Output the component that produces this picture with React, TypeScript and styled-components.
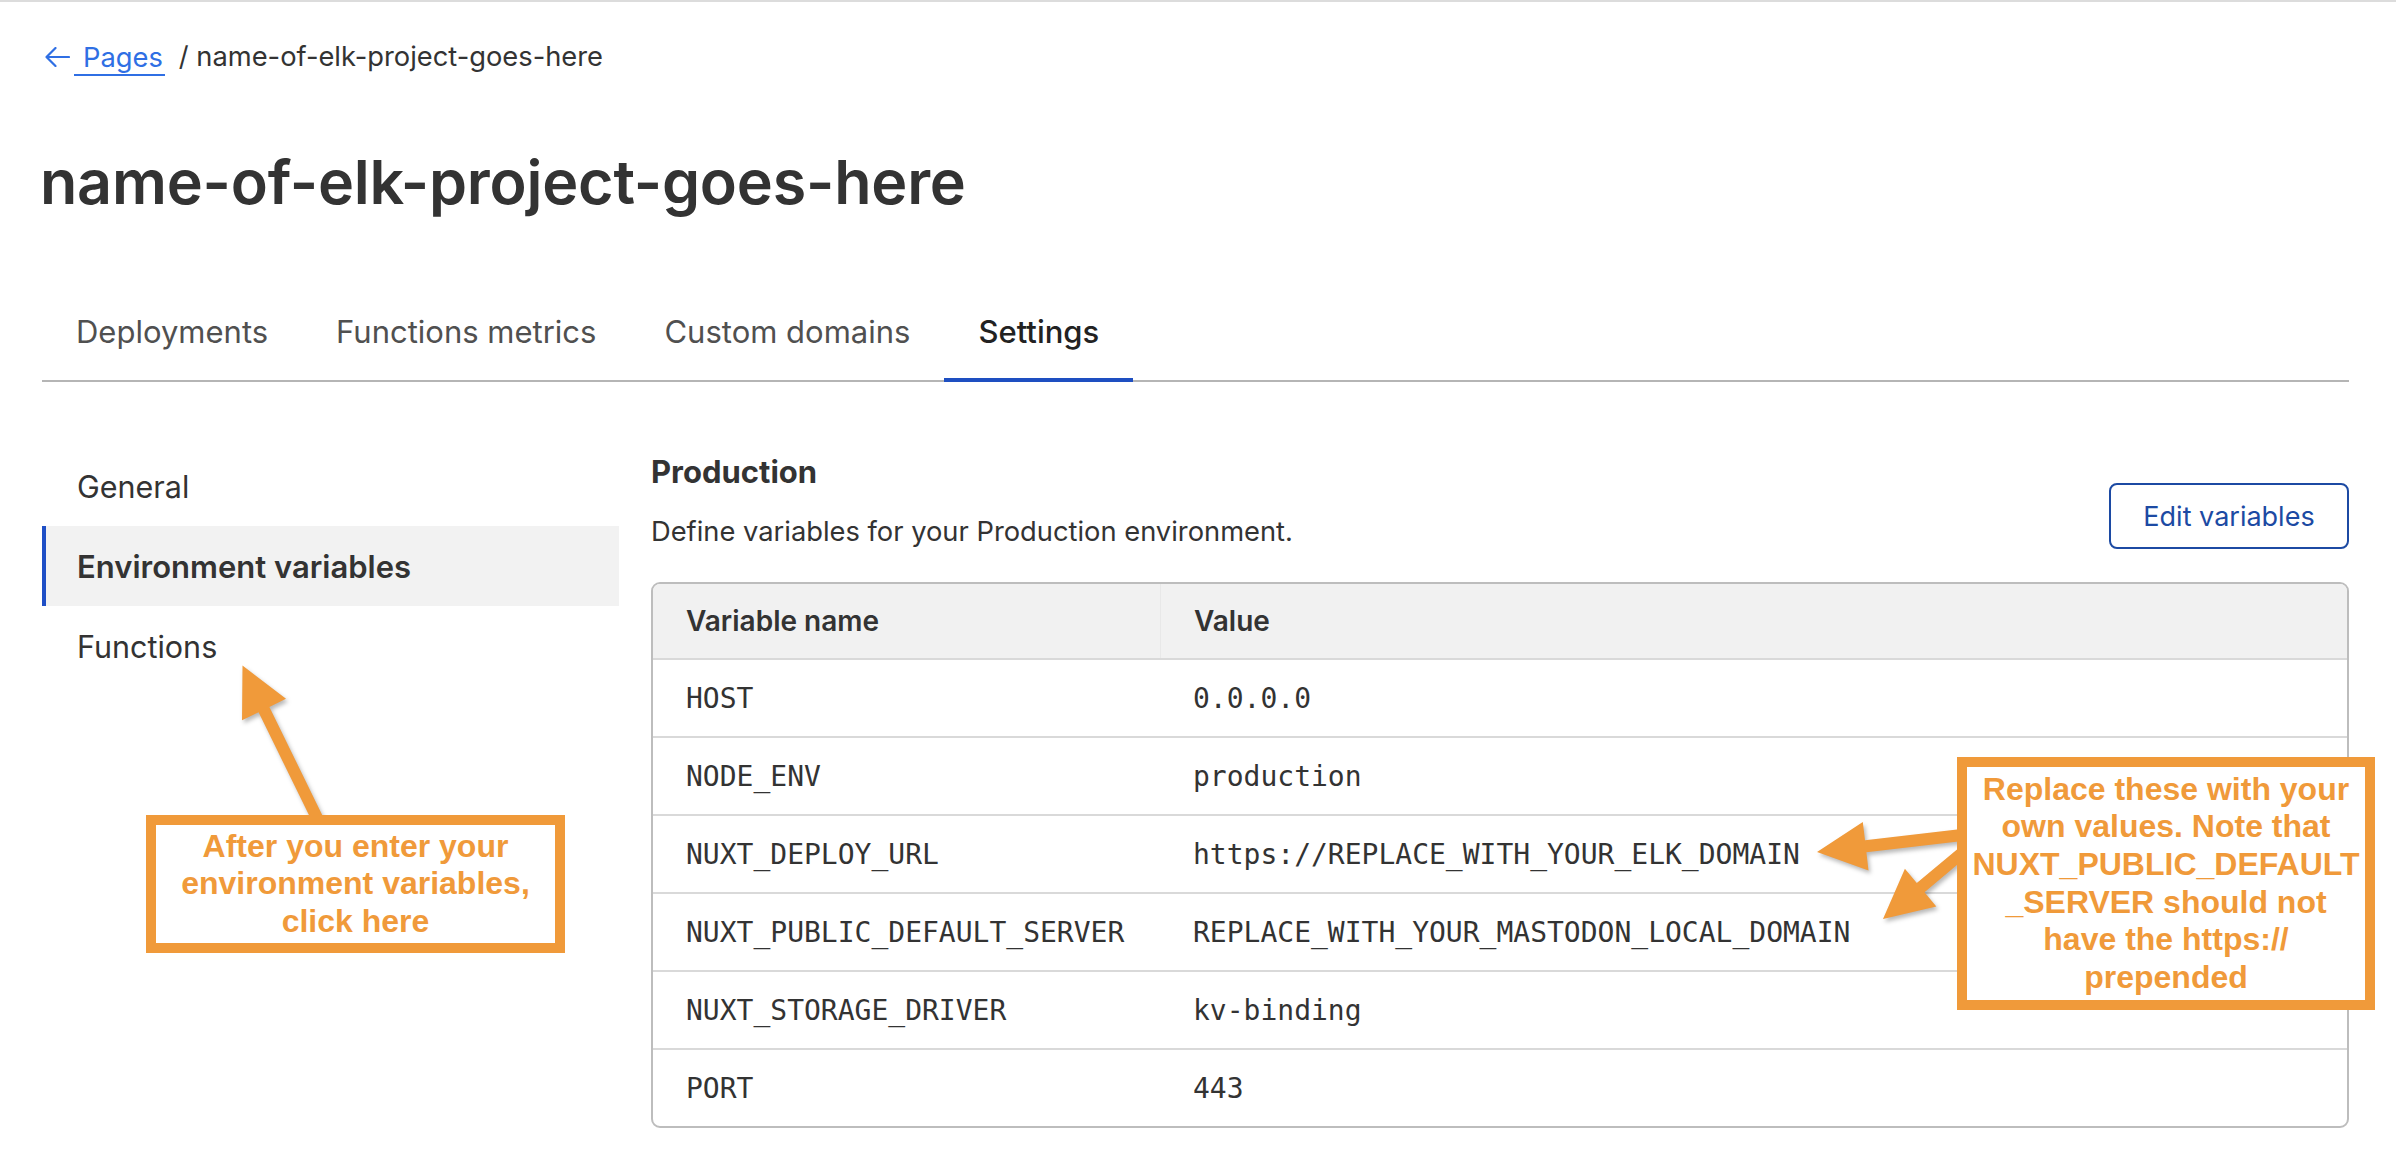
import React from "react";
import styled, { createGlobalStyle } from "styled-components";

const ORANGE = "#f09a3a";

const GlobalStyle = createGlobalStyle`
  html, body { margin: 0; padding: 0; background: #ffffff; }
  body { font-family: Inter, "Noto Sans", Arial, sans-serif; color: #333333; }
  * { box-sizing: border-box; }
`;

const Root = styled.div`
  position: relative;
  width: 2396px;
  height: 1172px;
  overflow: hidden;
  background: #fff;
`;

const TopRule = styled.div`
  height: 2px;
  background: #dcdcdc;
`;

const Page = styled.div`
  padding: 35px 47px 0 42px;
`;

const Breadcrumb = styled.nav`
  display: flex;
  align-items: center;
  height: 40px;
  font-size: 27.3px;
  line-height: 32px;
  color: #333;
`;

const BackLink = styled.a`
  display: inline-flex;
  align-items: center;
  margin-left: 3px;
  color: #2f6fe4;
  text-decoration: none;
`;

const LinkLabel = styled.span`
  display: block;
  margin-left: 4px;
  padding: 3px 2px 0 9px;
  border-bottom: 2px solid #2f6fe4;
`;

const Crumb = styled.span`
  margin-left: 14px;
  color: #333;
`;

const Title = styled.h1`
  margin: 69px 0 0 -2px;
  font-size: 61px;
  line-height: 72px;
  font-weight: 600;
  color: #333;
  letter-spacing: -0.2px;
`;

const TabBar = styled.div`
  display: flex;
  margin-top: 74px;
  border-bottom: 2px solid #b5b5b5;
`;

const Tab = styled.div<{ $active?: boolean }>`
  padding: 20px 34px 26px;
  margin-bottom: -2px;
  font-size: 31px;
  line-height: 40px;
  color: ${(p) => (p.$active ? "#222" : "#505050")};
  font-weight: ${(p) => (p.$active ? 500 : 400)};
  border-bottom: 4px solid ${(p) => (p.$active ? "#1e4fc1" : "transparent")};
`;

const Body = styled.div`
  display: grid;
  grid-template-columns: 577px 1fr;
  column-gap: 32px;
  margin-top: 64px;
`;

const Sidebar = styled.nav`
  display: flex;
  flex-direction: column;
`;

const SideItem = styled.div<{ $active?: boolean }>`
  height: 80px;
  display: flex;
  align-items: center;
  padding-left: 31px;
  font-size: ${(p) => (p.$active ? "31px" : "30.5px")};
  color: #333;
  font-weight: ${(p) => (p.$active ? 600 : 400)};
  background: ${(p) => (p.$active ? "#f2f2f2" : "transparent")};
  border-left: 4px solid ${(p) => (p.$active ? "#1f4fc6" : "transparent")};
`;

const Main = styled.section`
  padding-top: 8px;
`;

const SectionHead = styled.div`
  display: flex;
  justify-content: space-between;
  align-items: flex-end;
`;

const SectionTitle = styled.h2`
  margin: 0;
  font-size: 31px;
  line-height: 36px;
  font-weight: 650;
  color: #333;
`;

const Description = styled.p`
  margin: 22px 0 0;
  font-size: 27.3px;
  line-height: 40px;
  color: #333;
`;

const EditButton = styled.button`
  width: 240px;
  height: 66px;
  margin-bottom: 3px;
  border: 2px solid #1c4aa3;
  border-radius: 8px;
  background: #fff;
  color: #1c4aa3;
  font-family: Inter, "Noto Sans", Arial, sans-serif;
  font-size: 27px;
`;

const Table = styled.div`
  margin-top: 30px;
  border: 2px solid #bdbdbd;
  border-radius: 9px;
  overflow: hidden;
`;

const HeadRow = styled.div`
  display: grid;
  grid-template-columns: 507px 1fr;
  height: 74px;
  background: #f1f1f1;
  font-size: 28px;
  font-weight: 600;
  color: #333;
`;

const Row = styled.div`
  display: grid;
  grid-template-columns: 507px 1fr;
  height: 78px;
  border-top: 2px solid #d9d9d9;
  font-family: "DejaVu Sans Mono", "Liberation Mono", monospace;
  font-size: 28px;
  color: #333;
`;

const Cell = styled.div<{ $divider?: boolean }>`
  display: flex;
  align-items: center;
  padding-left: 33px;
  border-left: ${(p) => (p.$divider ? "1px solid #e8e8e8" : "none")};
`;

const Overlay = styled.div`
  position: absolute;
  inset: 0;
  pointer-events: none;
`;

const ArrowLayer = styled.svg`
  position: absolute;
  left: 0;
  top: 0;
  filter: drop-shadow(2px 3px 2px rgba(0, 0, 0, 0.28));
`;

const Callout = styled.div<{ $x: number; $y: number; $w: number; $h: number }>`
  position: absolute;
  left: ${(p) => p.$x}px;
  top: ${(p) => p.$y}px;
  width: ${(p) => p.$w}px;
  height: ${(p) => p.$h}px;
  border: 10px solid ${ORANGE};
  background: #fff;
  display: flex;
  flex-direction: column;
  align-items: center;
  justify-content: center;
  font-family: "Liberation Sans", Arial, sans-serif;
  font-weight: 700;
  font-size: 32px;
  line-height: 37.6px;
  color: ${ORANGE};
  text-align: center;
`;

const CalloutLine = styled.span`
  display: block;
  white-space: nowrap;
`;

function arrowPoints(
  tx: number,
  ty: number,
  px: number,
  py: number,
  headLen = 49,
  headHalf = 24.5,
  shaftHalf = 6
) {
  const dx = px - tx;
  const dy = py - ty;
  const len = Math.hypot(dx, dy);
  const ux = dx / len;
  const uy = dy / len;
  const nx = -uy;
  const ny = ux;
  const bx = px - ux * headLen;
  const by = py - uy * headLen;
  const pts = [
    [tx + nx * shaftHalf, ty + ny * shaftHalf],
    [bx + nx * shaftHalf, by + ny * shaftHalf],
    [bx + nx * headHalf, by + ny * headHalf],
    [px, py],
    [bx - nx * headHalf, by - ny * headHalf],
    [bx - nx * shaftHalf, by - ny * shaftHalf],
    [tx - nx * shaftHalf, ty - ny * shaftHalf],
  ];
  return pts.map((p) => `${p[0].toFixed(1)},${p[1].toFixed(1)}`).join(" ");
}

const BackArrow = () => (
  <svg width="25" height="20" viewBox="0 0 25 20" fill="none">
    <path d="M24 10H1.5M10.5 1L1.5 10l9 9" stroke="#2f6fe4" strokeWidth="2.2" strokeLinecap="round" strokeLinejoin="round" />
  </svg>
);

const rows: [string, string][] = [
  ["HOST", "0.0.0.0"],
  ["NODE_ENV", "production"],
  ["NUXT_DEPLOY_URL", "https://REPLACE_WITH_YOUR_ELK_DOMAIN"],
  ["NUXT_PUBLIC_DEFAULT_SERVER", "REPLACE_WITH_YOUR_MASTODON_LOCAL_DOMAIN"],
  ["NUXT_STORAGE_DRIVER", "kv-binding"],
  ["PORT", "443"],
];

export default function App() {
  return (
    <Root>
      <GlobalStyle />
      <TopRule />
      <Page>
        <Breadcrumb>
          <BackLink href="#">
            <BackArrow />
            <LinkLabel>Pages</LinkLabel>
          </BackLink>
          <Crumb>/ name-of-elk-project-goes-here</Crumb>
        </Breadcrumb>
        <Title>name-of-elk-project-goes-here</Title>
        <TabBar>
          <Tab>Deployments</Tab>
          <Tab>Functions metrics</Tab>
          <Tab>Custom domains</Tab>
          <Tab $active>Settings</Tab>
        </TabBar>
        <Body>
          <Sidebar>
            <SideItem>General</SideItem>
            <SideItem $active>Environment variables</SideItem>
            <SideItem>Functions</SideItem>
          </Sidebar>
          <Main>
            <SectionHead>
              <div>
                <SectionTitle>Production</SectionTitle>
                <Description>Define variables for your Production environment.</Description>
              </div>
              <EditButton>Edit variables</EditButton>
            </SectionHead>
            <Table>
              <HeadRow>
                <Cell>Variable name</Cell>
                <Cell $divider>Value</Cell>
              </HeadRow>
              {rows.map(([k, v]) => (
                <Row key={k}>
                  <Cell>{k}</Cell>
                  <Cell>{v}</Cell>
                </Row>
              ))}
            </Table>
          </Main>
        </Body>
      </Page>
      <Overlay>
        <ArrowLayer width="2396" height="1172" viewBox="0 0 2396 1172">
          <polygon points={arrowPoints(319, 822, 242.5, 665.5)} fill={ORANGE} />
          <polygon points={arrowPoints(1962, 835, 1817, 852)} fill={ORANGE} />
          <polygon points={arrowPoints(1962, 853, 1883, 919)} fill={ORANGE} />
        </ArrowLayer>
        <Callout $x={146} $y={815} $w={419} $h={138}>
          <CalloutLine>After you enter your</CalloutLine>
          <CalloutLine>environment variables,</CalloutLine>
          <CalloutLine>click here</CalloutLine>
        </Callout>
        <Callout $x={1957} $y={757} $w={418} $h={253}>
          <CalloutLine>Replace these with your</CalloutLine>
          <CalloutLine>own values. Note that</CalloutLine>
          <CalloutLine>NUXT_PUBLIC_DEFAULT</CalloutLine>
          <CalloutLine>_SERVER should not</CalloutLine>
          <CalloutLine>have the https://</CalloutLine>
          <CalloutLine>prepended</CalloutLine>
        </Callout>
      </Overlay>
    </Root>
  );
}
